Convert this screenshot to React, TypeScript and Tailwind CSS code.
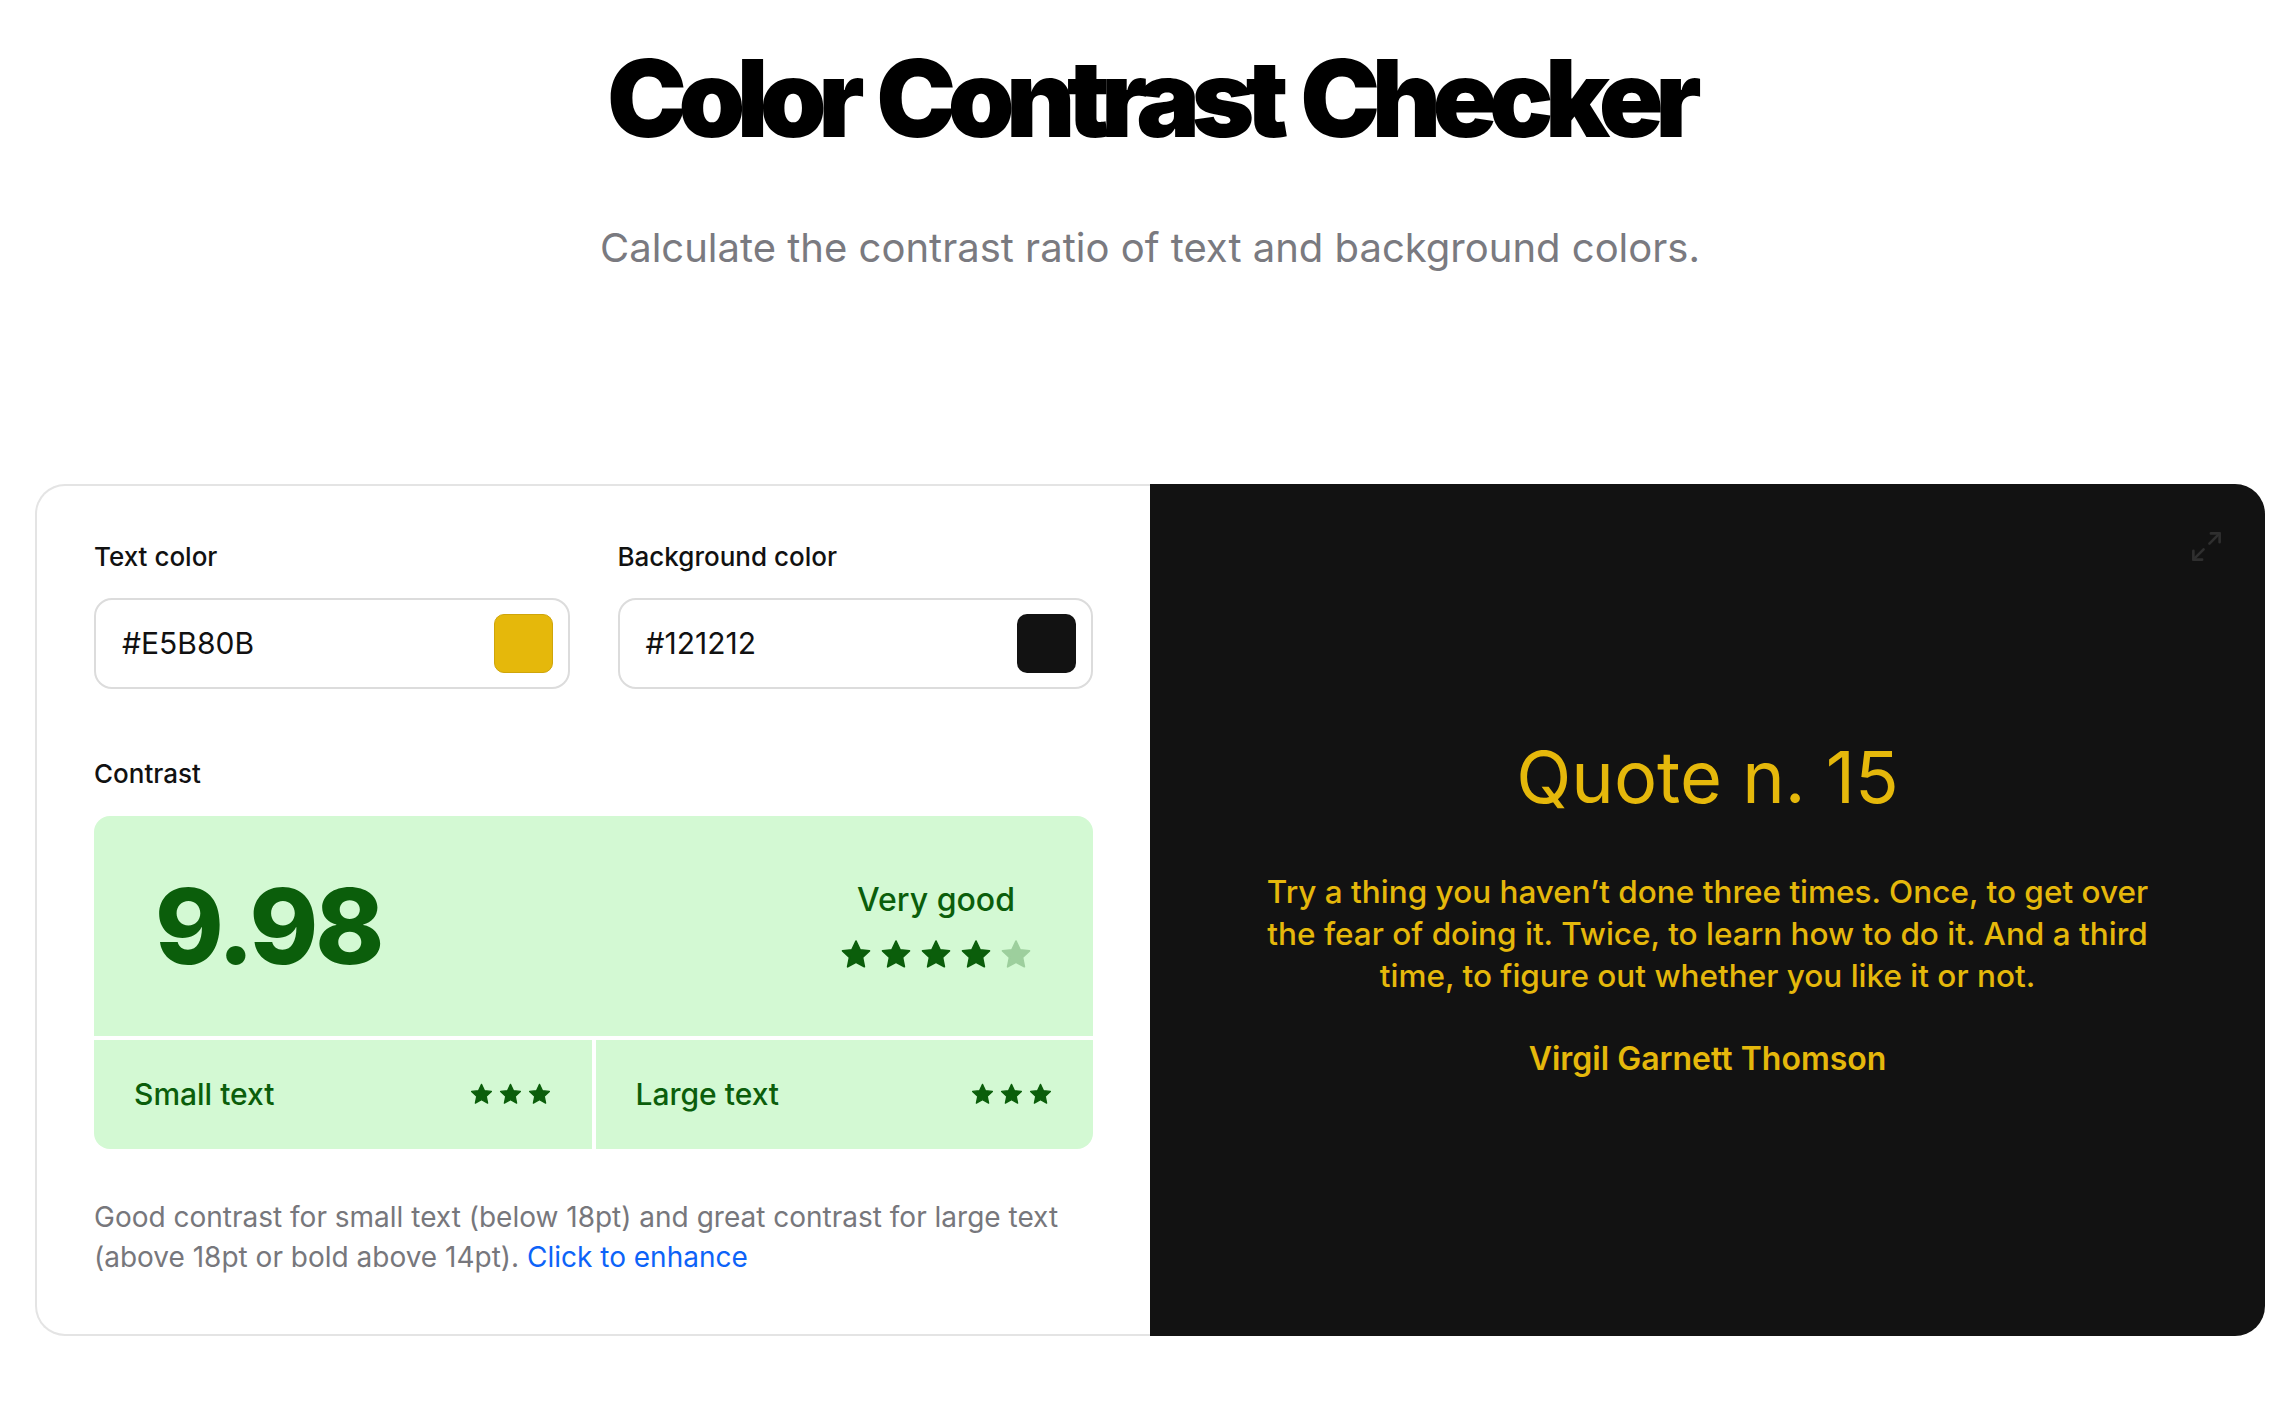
import { Maximize2 } from 'lucide-react'

function Star({ className }: { className: string }) {
  return (
    <svg viewBox="0 0 24 24" className={className} fill="currentColor">
      <path
        d="M12 2.2l2.9 6.1 6.6.8-4.9 4.6 1.3 6.6L12 17.1l-5.9 3.2 1.3-6.6-4.9-4.6 6.6-.8z"
        stroke="currentColor"
        strokeWidth="1.2"
        strokeLinejoin="round"
      />
    </svg>
  )
}

function ColorField({ label, value, swatch }: { label: string; value: string; swatch: string }) {
  return (
    <div className="flex flex-col">
      <label className="text-[26px] leading-[32px] font-medium text-[#111]">{label}</label>
      <div className="mt-[25px] flex h-[91px] items-center justify-between rounded-[18px] border-2 border-[#dcdcdc] pl-[26px] pr-[15px]">
        <span className="text-[30px] text-[#111]">{value}</span>
        <div className={swatch} />
      </div>
    </div>
  )
}

export default function App() {
  return (
    <main className="min-h-screen bg-white font-['Inter','Liberation_Sans',sans-serif] text-[#111]">
      <div className="pl-[35px] pr-[31px] pt-[45px]">
        <header className="text-center">
          <h1 className="text-[107px] leading-none font-black tracking-[-0.08em] [word-spacing:0.07em] text-black">
            Color Contrast Checker
          </h1>
          <p className="mt-[67px] text-[40px] leading-[57px] text-[#7a7a80]">
            Calculate the contrast ratio of text and background colors.
          </p>
        </header>

        <section className="mt-[208px] grid h-[852px] grid-cols-2">
          {/* controls */}
          <div className="flex flex-col rounded-l-[30px] border-2 border-r-0 border-[#e4e4e4] px-[57px] pt-[55px]">
            <div className="grid grid-cols-2 gap-[48px]">
              <ColorField
                label="Text color"
                value="#E5B80B"
                swatch="h-[59px] w-[59px] rounded-[10px] border border-[#cfa50a] bg-[#E5B80B]"
              />
              <ColorField
                label="Background color"
                value="#121212"
                swatch="h-[59px] w-[59px] rounded-[10px] bg-[#121212]"
              />
            </div>

            <div className="mt-[69px] text-[26px] leading-[32px] font-medium">Contrast</div>

            <div className="mt-[26px] grid grid-cols-2 gap-[4px] text-[#0b5e0b]">
              <div className="col-span-2 flex h-[220px] items-center justify-between rounded-t-[16px] bg-[#d3f9d3] pl-[61px] pr-[60px]">
                <span className="text-[104px] leading-none font-extrabold tracking-[-0.03em]">9.98</span>
                <div className="flex flex-col items-center gap-[18px]">
                  <span className="text-[32px] leading-[40px] font-medium">Very good</span>
                  <div className="flex gap-[6px]">
                    <Star className="h-[34px] w-[34px]" />
                    <Star className="h-[34px] w-[34px]" />
                    <Star className="h-[34px] w-[34px]" />
                    <Star className="h-[34px] w-[34px]" />
                    <Star className="h-[34px] w-[34px] text-[#9dcf9d]" />
                  </div>
                </div>
              </div>
              <div className="flex h-[109px] items-center justify-between rounded-bl-[16px] bg-[#d3f9d3] px-[40px]">
                <span className="text-[30px] font-medium">Small text</span>
                <div className="flex gap-[4px]">
                  <Star className="h-[25px] w-[25px]" />
                  <Star className="h-[25px] w-[25px]" />
                  <Star className="h-[25px] w-[25px]" />
                </div>
              </div>
              <div className="flex h-[109px] items-center justify-between rounded-br-[16px] bg-[#d3f9d3] px-[40px]">
                <span className="text-[30px] font-medium">Large text</span>
                <div className="flex gap-[4px]">
                  <Star className="h-[25px] w-[25px]" />
                  <Star className="h-[25px] w-[25px]" />
                  <Star className="h-[25px] w-[25px]" />
                </div>
              </div>
            </div>

            <p className="mt-[48px] text-[28px] leading-[40px] text-[#77777c]">
              Good contrast for small text (below 18pt) and great contrast for large text (above 18pt or bold above
              14pt). <a className="cursor-pointer text-[#0d63f8]">Click to enhance</a>
            </p>
          </div>

          {/* preview */}
          <div className="relative flex flex-col items-center justify-center rounded-r-[30px] bg-[#121212] text-center text-[#E5B80B]">
            <Maximize2 className="absolute right-[41px] top-[45px] h-[35px] w-[35px] text-[#2f2f2f]" strokeWidth={1.8} />
            <h2 className="text-[72px] leading-none font-normal">Quote n. 15</h2>
            <p className="mt-[58px] max-w-[900px] text-[31.5px] leading-[42px] font-medium">
              Try a thing you haven’t done three times. Once, to get over the fear of doing it. Twice, to learn how to
              do it. And a third time, to figure out whether you like it or not.
            </p>
            <p className="mt-[42px] text-[32px] leading-[40px] font-semibold">Virgil Garnett Thomson</p>
          </div>
        </section>
      </div>
    </main>
  )
}
